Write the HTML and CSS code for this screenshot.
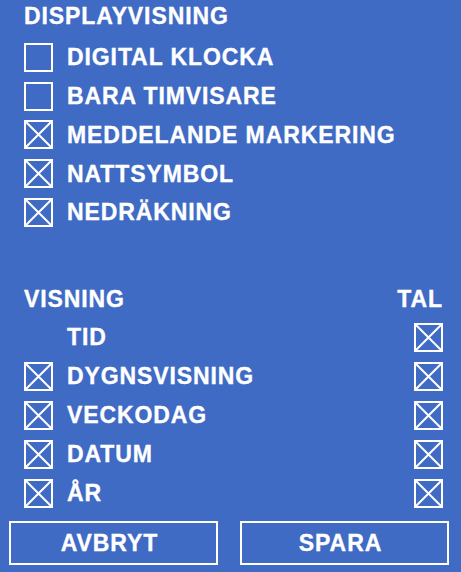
FILE: index.html
```html
<!DOCTYPE html>
<html lang="sv">
<head>
<meta charset="utf-8">
<title>Displayvisning</title>
<link rel="stylesheet" href="styles.css">
</head>
<body>
<div class="screen">
  <section class="display">
    <div class="heading">DISPLAYVISNING</div>
    <div class="rows">
      <div class="row"><span class="box"></span><span class="label">DIGITAL KLOCKA</span></div>
      <div class="row"><span class="box"></span><span class="label">BARA TIMVISARE</span></div>
      <div class="row"><span class="box checked"><svg viewBox="0 0 29 29"><rect x="1" y="1" width="27" height="27"/><path d="M1 1L28 28M28 1L1 28"/></svg></span><span class="label">MEDDELANDE MARKERING</span></div>
      <div class="row"><span class="box checked"><svg viewBox="0 0 29 29"><rect x="1" y="1" width="27" height="27"/><path d="M1 1L28 28M28 1L1 28"/></svg></span><span class="label">NATTSYMBOL</span></div>
      <div class="row"><span class="box checked"><svg viewBox="0 0 29 29"><rect x="1" y="1" width="27" height="27"/><path d="M1 1L28 28M28 1L1 28"/></svg></span><span class="label">NEDRÄKNING</span></div>
    </div>
  </section>

  <section class="visning">
    <div class="vrow vhead"><span class="heading">VISNING</span><span class="heading">TAL</span></div>
    <div class="vrow">
      <div class="row"><span class="box empty-slot"></span><span class="label">TID</span></div>
      <span class="box checked"><svg viewBox="0 0 29 29"><rect x="1" y="1" width="27" height="27"/><path d="M1 1L28 28M28 1L1 28"/></svg></span>
    </div>
    <div class="vrow">
      <div class="row"><span class="box checked"><svg viewBox="0 0 29 29"><rect x="1" y="1" width="27" height="27"/><path d="M1 1L28 28M28 1L1 28"/></svg></span><span class="label">DYGNSVISNING</span></div>
      <span class="box checked"><svg viewBox="0 0 29 29"><rect x="1" y="1" width="27" height="27"/><path d="M1 1L28 28M28 1L1 28"/></svg></span>
    </div>
    <div class="vrow">
      <div class="row"><span class="box checked"><svg viewBox="0 0 29 29"><rect x="1" y="1" width="27" height="27"/><path d="M1 1L28 28M28 1L1 28"/></svg></span><span class="label">VECKODAG</span></div>
      <span class="box checked"><svg viewBox="0 0 29 29"><rect x="1" y="1" width="27" height="27"/><path d="M1 1L28 28M28 1L1 28"/></svg></span>
    </div>
    <div class="vrow">
      <div class="row"><span class="box checked"><svg viewBox="0 0 29 29"><rect x="1" y="1" width="27" height="27"/><path d="M1 1L28 28M28 1L1 28"/></svg></span><span class="label">DATUM</span></div>
      <span class="box checked"><svg viewBox="0 0 29 29"><rect x="1" y="1" width="27" height="27"/><path d="M1 1L28 28M28 1L1 28"/></svg></span>
    </div>
    <div class="vrow">
      <div class="row"><span class="box checked"><svg viewBox="0 0 29 29"><rect x="1" y="1" width="27" height="27"/><path d="M1 1L28 28M28 1L1 28"/></svg></span><span class="label">ÅR</span></div>
      <span class="box checked"><svg viewBox="0 0 29 29"><rect x="1" y="1" width="27" height="27"/><path d="M1 1L28 28M28 1L1 28"/></svg></span>
    </div>
  </section>

  <div class="buttons">
    <div class="btn">AVBRYT</div>
    <div class="btn">SPARA</div>
  </div>
</div>
</body>
</html>
```

FILE: styles.css
```css
html, body {
  margin: 0;
  padding: 0;
  background: #3f6bc4;
}

.screen {
  width: 461px;
  height: 572px;
  box-sizing: border-box;
  background: #3f6bc4;
  color: #ffffff;
  font-family: "Liberation Sans", Arial, sans-serif;
  font-weight: bold;
  font-size: 23px;
  letter-spacing: 0.9px;
  -webkit-text-stroke: 0.35px #ffffff;
  overflow: hidden;
}

.display {
  padding-left: 24px;
}

.heading {
  display: block;
  height: 32px;
  line-height: 32px;
}

.rows {
  margin-top: 6px;
}

.row {
  display: flex;
  align-items: center;
  height: 38.75px;
}

.box {
  display: block;
  width: 29px;
  height: 29px;
  box-sizing: border-box;
  border: 2px solid #ffffff;
  flex: none;
}

.box.checked {
  border: none;
}

.box.empty-slot {
  border-color: transparent;
}

.box svg {
  display: block;
  width: 29px;
  height: 29px;
}

.box svg rect,
.box svg path {
  fill: none;
  stroke: #ffffff;
  stroke-width: 2;
}

.label {
  margin-left: 14px;
  line-height: 28px;
}

.visning {
  margin-top: 47.75px;
  padding-left: 24px;
  padding-right: 18px;
}

.vrow {
  display: flex;
  align-items: center;
  justify-content: space-between;
  height: 39px;
}

.vrow .row {
  height: 39px;
}

.vrow.vhead {
  height: 38px;
}

.vhead .heading {
  height: 38px;
  line-height: 38px;
}

.buttons {
  display: flex;
  gap: 22px;
  padding: 8.5px 12px 0 9px;
}

.btn {
  width: 209px;
  height: 44px;
  box-sizing: border-box;
  border: 2px solid #ffffff;
  display: flex;
  align-items: center;
  justify-content: center;
  padding-right: 8px;
  line-height: 28px;
}
```
